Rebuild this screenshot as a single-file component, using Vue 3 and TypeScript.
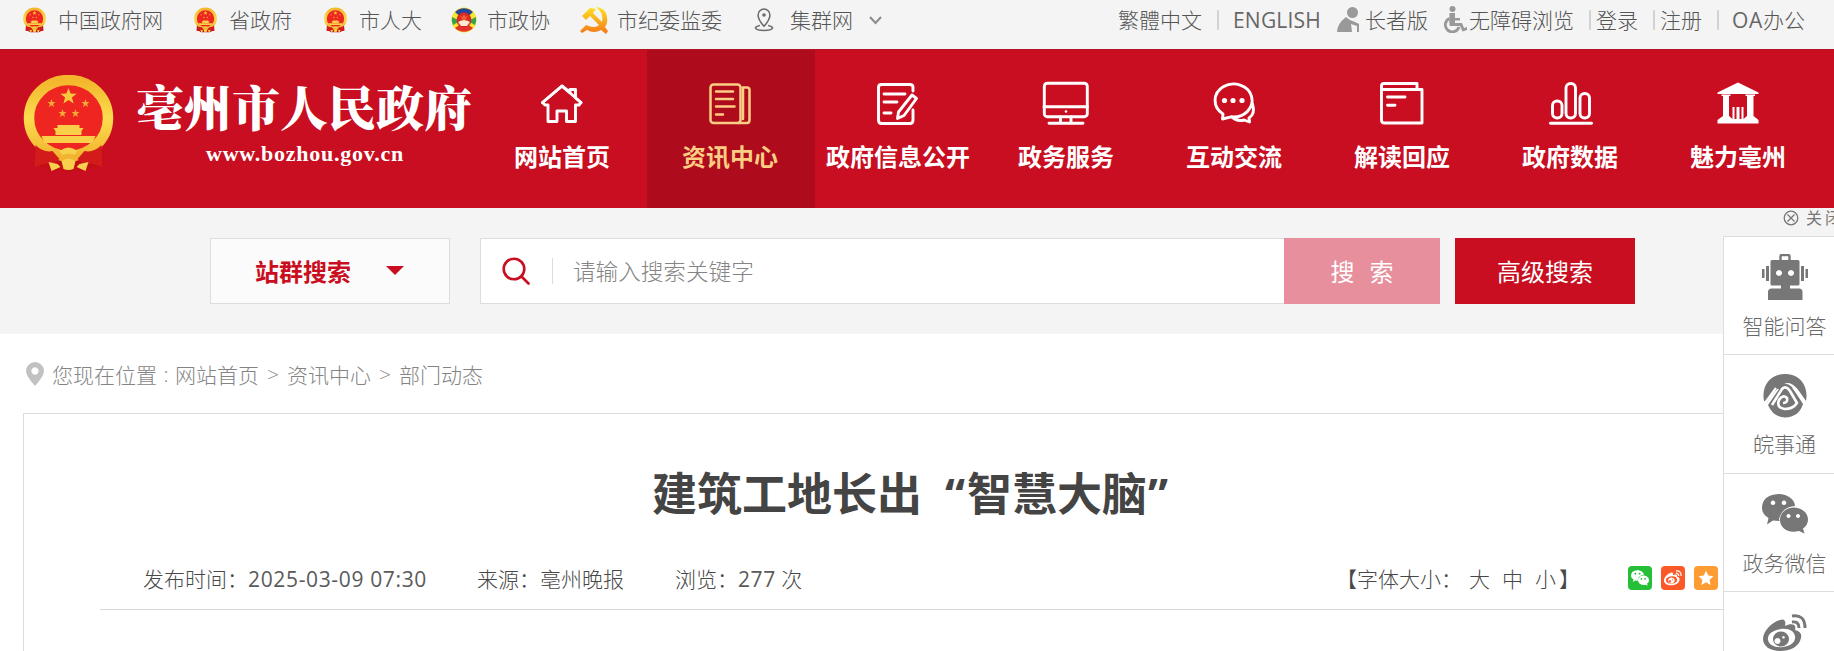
<script setup lang="ts">
interface Link {
  label: string
  icon: string
}

const siteLinks: Link[] = [
  { label: '中国政府网', icon: 'emblem' },
  { label: '省政府', icon: 'emblem' },
  { label: '市人大', icon: 'emblem' },
  { label: '市政协', icon: 'cppcc' },
  { label: '市纪委监委', icon: 'party' },
  { label: '集群网', icon: 'place' },
]

const navItems: Link[] = [
  { label: '网站首页', icon: 'home' },
  { label: '资讯中心', icon: 'news' },
  { label: '政府信息公开', icon: 'edit' },
  { label: '政务服务', icon: 'monitor' },
  { label: '互动交流', icon: 'chat' },
  { label: '解读回应', icon: 'book' },
  { label: '政府数据', icon: 'chart' },
  { label: '魅力亳州', icon: 'temple' },
]
const activeNav = '资讯中心'

const sideItems: Link[] = [
  { label: '智能问答', icon: 'robot' },
  { label: '皖事通', icon: 'wan' },
  { label: '政务微信', icon: 'wechat' },
  { label: '', icon: 'weibo' },
]

const shares = ['wechat', 'weibo', 'star']
</script>

<template>
  <div class="page">
    <svg class="defs" width="0" height="0" aria-hidden="true">
      <defs>
        <linearGradient id="gold" x1="0" y1="0" x2="0" y2="1">
          <stop offset="0" stop-color="#f3b62c" />
          <stop offset=".5" stop-color="#fbdc4e" />
          <stop offset="1" stop-color="#f2b430" />
        </linearGradient>
        <linearGradient id="flame" x1="0" y1="0" x2="0" y2="1">
          <stop offset="0" stop-color="#fde321" />
          <stop offset="1" stop-color="#f5761b" />
        </linearGradient>
      </defs>
      <symbol id="i-emblem" viewBox="0 0 90 97">
        <path d="M12 66 L78 66 L80 90 Q68 92 62 96 L28 96 Q20 91 10 90Z" fill="#c20f16" />
        <ellipse cx="45" cy="43" rx="39.5" ry="38" fill="#ee2520" stroke="url(#gold)" stroke-width="10.5" />
        <path d="M45 13l2.1 5.6 6 .2-4.7 3.8 1.7 5.8-5.1-3.3-5.1 3.3 1.7-5.8-4.7-3.8 6-.2z" fill="#f9c840" />
        <path d="M28 24l1 3 3 0-2.400 2 1 3-2.600-1.800-2.600 1.800 1-3-2.400-2 3 0zM62 24l1 3 3 0-2.400 2 1 3-2.600-1.800-2.600 1.800 1-3-2.400-2 3 0zM39 34l1 3 3 0-2.400 2 1 3-2.600-1.800-2.600 1.800 1-3-2.400-2 3 0zM52 34l1 3 3 0-2.400 2 1 3-2.600-1.800-2.600 1.800 1-3-2.400-2 3 0z" fill="#f5a936" />
        <path d="M34 50h22v3h4l-2 3v4H32v-4l-2-3h4zM18 61h54l-3 7H21z" fill="#f9cf49" />
        <path d="M12 70q8 8 17 6l7 8-5 4q-10 0-20 4zM78 70q-8 8-17 6l-7 8 5 4q10 0 20 4z" fill="#d31b1c" />
        <path d="M36 76q9-7 18 0l-3 4q-6-3-12 0zM38 86q7-5 14 0l-2 8q-5 2-10 0zM25 87l9 2 3 3-9 4zM65 87l-9 2-3 3 9 4z" fill="#f8d04c" />
      </symbol>
      <symbol id="i-cppcc" viewBox="0 0 26 26">
        <circle cx="13" cy="13" r="12.500" fill="#f7e62b" />
        <path d="M4 5A12.500 12.500 0 0 1 22 5L13 13Z" fill="#28459c" />
        <path d="M1 10A12.500 12.500 0 0 0 2 18L9 14ZM25 10A12.500 12.500 0 0 1 24 18L17 14Z" fill="#35a44a" />
        <path d="M4 21A12.500 12.500 0 0 0 22 21L13 15Z" fill="#e3342c" />
        <circle cx="13" cy="13" r="7.500" fill="#d92826" />
        <path d="M7 15q6-4 12 0l-3 4h-6z" fill="#fbe9d4" />
        <path d="M13 7l1.200 2.600h3l-2.300 1.800.8 2.800-2.700-1.700-2.700 1.700.8-2.800-2.300-1.800h3z" fill="#f0602c" />
      </symbol>
      <symbol id="i-party" viewBox="0 0 28 28">
        <path d="M16 1q10 1 11 10 1 6-2 10l3 4-2 3-5-4Q14 28 7 24l-5 3-2-2 6-6q9 4 13 0L10 10 6 14 2 10l8-8 6 1-3 4 9 9q2-9-6-15z" fill="url(#flame)" />
      </symbol>
      <symbol id="i-place" viewBox="0 0 22 26">
        <g fill="none" stroke="#6d6d6d" stroke-width="1.700">
          <path d="M11 20.500Q4.500 13 4.500 8.200A6.500 6.700 0 0 1 17.500 8.200Q17.500 13 11 20.500Z" />
          <path d="M6.500 19.500C-1 21 0 25 11 25S23 21 15.500 19.500" />
        </g>
        <circle cx="11" cy="8" r="2" fill="#6d6d6d" />
      </symbol>

      <symbol id="i-home" viewBox="0 0 48 48">
        <path d="M24 6L4.500 22.500L7 25H10V41.500H19V31H28.500V41.500H37.500V25H41L43 22.500L37.500 18V9.500H32V12.500Z" />
        <path d="M4.500 22.500L24 6L43 22.500" />
      </symbol>
      <symbol id="i-news" viewBox="0 0 48 48">
        <rect x="4.500" y="4.500" width="30" height="38.500" rx="3" />
        <path d="M36.500 7.500H41Q43.500 7.500 43.500 10V40Q43.500 43 41 43H32M37 8V39M10 11.500H27M10 19H27M10 26.500H28.500M10 34.500H17" />
      </symbol>
      <symbol id="i-edit" viewBox="0 0 48 48">
        <path d="M39 11V7.500Q39 4.500 36 4.500H7.500Q4.500 4.500 4.500 7.500V40Q4.500 43.500 7.500 43.500H36Q39 43.500 39 40V30M10 14H31M10 22H23M10 33H17" />
        <path d="M38 15L42.500 18.500L30 35.500L23.500 38.500L24.500 32Z" />
      </symbol>
      <symbol id="i-monitor" viewBox="0 0 48 48">
        <rect x="2.300" y="3.200" width="43" height="33.500" rx="3" />
        <path d="M2 26.800H45.500M18.500 37V43M29 37V43M7 43.200H41" />
        <circle class="solid" cx="24" cy="31.500" r="1.300" />
      </symbol>
      <symbol id="i-chat" viewBox="0 0 48 48">
        <path d="M12.500 39L13 34A18.500 16.500 0 1 1 21 36.800Z" />
        <path d="M42.500 24Q45.500 34 39 38L39.500 42L34 40Q27 42 22 37" />
        <circle class="solid" cx="14.500" cy="20.500" r="2.600" />
        <circle class="solid" cx="23" cy="20.500" r="2.600" />
        <circle class="solid" cx="32" cy="20.500" r="2.600" />
      </symbol>
      <symbol id="i-book" viewBox="0 0 48 48">
        <path d="M3.500 9.500V6Q3.500 3.500 6 3.500H39V9.500M3.500 9.500H44V43H6.500Q3.500 43 3.500 40ZM9.500 17H27M9.500 25.300H17" />
      </symbol>
      <symbol id="i-chart" viewBox="0 0 48 48">
        <rect x="6.500" y="21" width="9.500" height="17" rx="4.500" />
        <rect x="20" y="3.500" width="9.500" height="34.500" rx="4.500" />
        <rect x="34" y="13.500" width="9.500" height="24.500" rx="4.500" />
        <path d="M4.500 43.200H45.500" />
      </symbol>
      <symbol id="i-temple" viewBox="0 0 48 48">
        <path class="solid" d="M24 2.500L44.500 12.500V14H3.500V12.500ZM7.500 14.500H16.500V16H15V36L18.500 39V27H20.500V39H22.500V27H25.500V39H27.500V27H29.500V39L33 36V16H31.500V14.500H41V16H39.500V36L44.500 40V43.500H3.500V40L9 36V16H7.500Z" />
      </symbol>

      <symbol id="i-robot" viewBox="0 0 46 46">
        <path d="M18.500 6V2.500Q18.500 1 20 1H26Q27.500 1 27.500 2.500V6" fill="none" stroke="currentColor" stroke-width="2.400" />
        <path fill-rule="evenodd" d="M10 6H36Q37.500 6 37.500 7.500V30Q37.500 31.500 36 31.500H28V34.500H37Q40.500 34.500 40.500 38V46H6V38Q6 34.500 9.500 34.500H19V31.500H10Q8.500 31.500 8.500 30V7.500Q8.500 6 10 6ZM17 16A3 3 0 1 0 17.010 16ZM29 16A3 3 0 1 0 29.010 16Z" />
        <path d="M4 12h3v15H4zM39 12h3v15h-3zM0 15h2.500v9H0zM43.500 15H46v9h-2.500z" />
      </symbol>
      <symbol id="i-wan" viewBox="0 0 44 44">
        <path d="M1 27C-2 11 8 0 22 0S46 11 43 27L36 17Q30 9 25 9 18 9 9 21L4 28ZM5 31L16 15 11 15 20 10Q25 9 29 13L40 30Q36 43 22 43.500 10 43 5 31Z" />
        <path d="M9 31L19 15Q23 11 27 17L34 29Q30 35 22 35 13 34 16 26 20 20 24 24 25 29 20 29" fill="none" stroke="#fff" stroke-width="2.600" />
        <path d="M2 29L13 14M42 29L30 13" fill="none" stroke="#fff" stroke-width="2.200" />
      </symbol>
      <symbol id="i-wechat" viewBox="0 0 46 40">
        <path fill-rule="evenodd" d="M16.500 0C26 0 33 6 33 12Q20 13 17 25 18 27 17 27L11 26.500 5 30.500 6.500 24Q0 20 0 14 0 1 16.500 0ZM11 6.500A2.300 2.300 0 1 0 11.010 6.500ZM22 6.500A2.300 2.300 0 1 0 22.010 6.500Z" />
        <path fill-rule="evenodd" d="M31.500 13.500C40 13.500 46 19 46 25.500Q46 31 41 34.500L42.500 39.500 37 37C26 40 18 34 18 26 18 19 24 13.500 31.500 13.500ZM26.500 20A2 2 0 1 0 26.510 20ZM36 20A2 2 0 1 0 36.010 20Z" />
      </symbol>
      <symbol id="i-weibo" viewBox="0 0 44 38">
        <path fill-rule="evenodd" d="M17 6C22 4 23 8 22 12 28 9 34 10 32 16 37 17 39 20 38 24 36 33 27 37 17 37 7 37 0 32 0 25 0 17 9 8 17 6ZM18 15C10 16 4 20 5 26 6 31 12 34 20 33 28 32 33 28 32 22 31 17 26 14 18 15Z" />
        <path fill-rule="evenodd" d="M18 17.500A8 7.500 0 1 0 18.010 17.500ZM14.500 24A3 3 0 1 0 14.510 24ZM20.500 22A1.300 1.300 0 1 0 20.510 22Z" />
        <path d="M29 2Q42 0 42 14M29 8Q36 7 36 14" fill="none" stroke="currentColor" stroke-width="3" />
      </symbol>
      <symbol id="i-star" viewBox="0 0 24 24">
        <path d="M12 1l3.400 7.300 7.800.9-5.800 5.400 1.600 7.900-7-4-7 4 1.600-7.900L.8 9.200l7.800-.9z" />
      </symbol>
    </svg>

    <div class="topbar">
      <ul class="sites">
        <li v-for="(s, i) in siteLinks" :key="s.label" :class="['site', 's' + i]">
          <svg :class="'mark-' + s.icon"><use :href="'#i-' + s.icon" /></svg>
          <span>{{ s.label }}</span>
        </li>
        <li class="more">
          <svg viewBox="0 0 13 9"><path d="M1 1L6.500 7L12 1" fill="none" stroke="#8a8a8a" stroke-width="2" /></svg>
        </li>
      </ul>
      <div class="tools">
        <span>繁體中文</span>
        <i class="bar b1"></i>
        <span class="english">ENGLISH</span>
        <svg class="elder" viewBox="0 0 22 25">
          <circle cx="15.500" cy="5.500" r="5.500" />
          <path d="M9 10Q13 14 18 15L22 17V25H20V19L14 17 15 25H0Q0 17 9 10Z" />
        </svg>
        <span>长者版</span>
        <svg class="wheel" viewBox="0 0 25 27">
          <circle cx="10.500" cy="3" r="3" />
          <path d="M7.500 7H13V12H18V14.500H13V17H20L22 22 25 21V24L20.500 25.500 18 20H8Q7 20 7.500 7Z" />
          <path d="M7.500 12.500A7 7 0 1 0 17 21" fill="none" stroke="#999" stroke-width="2.800" />
        </svg>
        <span>无障碍浏览</span>
        <i class="bar b2"></i>
        <span>登录</span>
        <i class="bar b3"></i>
        <span>注册</span>
        <i class="bar b4"></i>
        <span class="office"><em>OA</em>办公</span>
      </div>
    </div>

    <header class="header">
      <div class="brand">
        <svg class="emblem"><use href="#i-emblem" /></svg>
        <div class="names">
          <div class="name">亳州市人民政府</div>
          <div class="url">www.bozhou.gov.cn</div>
        </div>
      </div>
      <nav class="nav">
        <a v-for="n in navItems" :key="n.label" :class="['nav-item', { active: n.label === activeNav }]">
          <svg class="nav-icon"><use :href="'#i-' + n.icon" /></svg>
          <span>{{ n.label }}</span>
        </a>
      </nav>
    </header>

    <section class="search">
      <div class="scope">
        <span>站群搜索</span>
        <i class="caret"></i>
      </div>
      <div class="field">
        <svg viewBox="0 0 28 28"><circle cx="12" cy="12" r="10.300" /><path d="M19.500 19.500L26.500 26.500" /></svg>
        <i class="split"></i>
        <span class="hint">请输入搜索关键字</span>
      </div>
      <button class="go"><span>搜</span><span>索</span></button>
      <button class="advanced">高级搜索</button>
    </section>

    <div class="crumbs">
      <svg viewBox="0 0 18 24"><path fill-rule="evenodd" d="M9 0A9 9 0 0 1 18 9Q18 14 9 24 0 14 0 9A9 9 0 0 1 9 0ZM9 5.300A3.700 3.700 0 1 0 9.010 5.300Z" /></svg>
      <span>您现在位置</span><b class="colon">:</b><span>网站首页</span><b>&gt;</b><span>资讯中心</span><b>&gt;</b><span>部门动态</span>
    </div>

    <article class="article">
      <h1>建筑工地长出<span class="open">“</span>智慧大脑<span class="shut">”</span></h1>
      <div class="meta">
        <span class="time">发布时间：<em>2025-03-09 07:30</em></span>
        <span class="source">来源：亳州晚报</span>
        <span class="views">浏览：<em>277</em> 次</span>
        <div class="sizes">
          <span class="lead">【字体大小：</span><span>大</span><span>中</span><span>小</span><span class="tail">】</span>
        </div>
        <div class="share">
          <i v-for="s in shares" :key="s" :class="s"><svg><use :href="'#i-' + s" /></svg></i>
        </div>
      </div>
    </article>

    <aside class="side">
      <div class="close">
        <svg viewBox="0 0 16 16"><circle cx="8" cy="8" r="6.800" /><path d="M4.500 4.500L11.500 11.500M11.500 4.500L4.500 11.500" /></svg>
        <span>关闭</span>
      </div>
      <div v-for="s in sideItems" :key="s.icon" class="side-item">
        <svg :class="s.icon"><use :href="'#i-' + s.icon" /></svg>
        <span v-if="s.label">{{ s.label }}</span>
      </div>
    </aside>
  </div>
</template>

<style>
html,
body {
  margin: 0;
  overflow: hidden;
}
</style>

<style scoped>
.page {
  position: relative;
  width: 1834px;
  height: 651px;
  overflow: hidden;
  background: #fff;
  color: #555;
  font-family: "Open Sans", "Noto Sans CJK SC", sans-serif;
  font-size: 21px;
  font-weight: 300;
  white-space: nowrap;
}
.defs {
  position: absolute;
}
svg {
  display: block;
  flex: none;
}
i,
em,
b {
  font-style: normal;
  font-weight: inherit;
}

.topbar {
  display: flex;
  justify-content: space-between;
  height: 49px;
  background: #f4f4f4;
  line-height: 38px;
}
.sites {
  display: flex;
  margin: 0;
  padding: 0;
  list-style: none;
}
.site {
  display: flex;
  height: 39px;
  align-items: center;
  box-sizing: border-box;
}
.s0 { width: 171px; margin-left: 23px; }
.s1 { width: 130px; }
.s2 { width: 127px; }
.s3 { width: 129px; }
.s4 { width: 174px; }
.s5 { width: 115px; }
.mark-emblem { width: 23px; height: 26px; margin-right: 12px; }
.mark-cppcc { width: 26px; height: 26px; margin-right: 10px; }
.mark-party { width: 28px; height: 28px; margin-right: 9px; }
.mark-place { width: 20px; height: 25px; margin-right: 16px; }
.more svg { width: 13px; height: 9px; margin-top: 16px; }
.tools {
  display: flex;
  height: 39px;
  align-items: center;
  margin-right: 27px;
}
.bar {
  width: 2px;
  height: 20px;
  background: #d2d2d2;
}
.b1 { margin: 0 14px 0 15px; }
.b2 { margin: 0 5px 0 15px; }
.b3 { margin: 0 5px 0 15px; }
.b4 { margin: 0 13px 0 15px; }
.english,
em {
  font-weight: 400;
}
.english {
  width: 89px;
  color: #666;
  letter-spacing: 0.2px;
}
.office {
  width: 75px;
}
.office em {
  color: #666;
  letter-spacing: 0.7px;
}
.elder { width: 22px; height: 25px; margin: 0 6px 0 15px; fill: #999; }
.wheel { width: 25px; height: 27px; margin: 0 2px 0 14px; fill: #999; }

.header {
  display: flex;
  height: 159px;
  box-sizing: border-box;
  border-top: 1px solid #b01523;
  background: #c80e20;
  color: #fff;
}
.brand {
  display: flex;
  width: 479px;
}
.emblem {
  width: 91px;
  height: 97px;
  margin: 25px 0 0 23px;
}
.names {
  margin-left: 22px;
  width: 340px;
}
.name {
  margin-top: 21px;
  font: 900 48px/70px "Noto Serif CJK SC", "Noto Sans CJK SC", serif;
}
.url {
  margin: 0 0 0 70px;
  font: bold 22px/26px "Liberation Serif", serif;
  letter-spacing: 0.75px;
}
.nav {
  display: flex;
}
.nav-item {
  display: flex;
  flex-direction: column;
  align-items: center;
  width: 168px;
  padding: 30px 2px 0 0;
  box-sizing: border-box;
  color: #fff;
  font-size: 24px;
  font-weight: 700;
  line-height: 36px;
}
.nav-item span {
  margin-top: 11px;
}
.nav-item.active {
  background: #ae0b1c;
  color: #fbce84;
}
.nav-icon {
  width: 48px;
  height: 48px;
  fill: none;
  stroke: currentColor;
  stroke-width: 2.9;
  stroke-linecap: round;
  stroke-linejoin: round;
}
.active .nav-icon {
  stroke-width: 2.5;
}
.solid {
  fill: currentColor;
  stroke: none;
}

.search {
  display: flex;
  height: 126px;
  padding: 30px 0 0 210px;
  box-sizing: border-box;
  background: #f4f4f4;
}
.scope {
  display: flex;
  align-items: center;
  width: 240px;
  height: 66px;
  padding: 0 0 2px 44px;
  box-sizing: border-box;
  border: 1px solid #ddd;
  background: #fbfbfb;
  color: #c80e20;
  font-size: 24px;
  font-weight: 700;
}
.caret {
  margin-left: 35px;
  border: 9px solid transparent;
  border-top-color: #c80e20;
  border-bottom: 0;
}
.field {
  display: flex;
  align-items: center;
  width: 804px;
  height: 66px;
  margin-left: 30px;
  box-sizing: border-box;
  border: 1px solid #ddd;
  border-right: 0;
  background: #fff;
}
.field svg {
  width: 28px;
  height: 28px;
  margin-left: 21px;
  fill: none;
  stroke: #c80e20;
  stroke-width: 2.6;
  stroke-linecap: round;
}
.split {
  width: 1px;
  height: 26px;
  margin: 0 20px 0 22px;
  background: #ddd;
}
.hint {
  padding-bottom: 2px;
  color: #848484;
  font-size: 22.6px;
}
button {
  height: 66px;
  padding: 0 0 2px;
  border: 0;
  color: #fff;
  font: 400 24px "Open Sans", "Noto Sans CJK SC", sans-serif;
}
.go {
  display: flex;
  align-items: center;
  justify-content: center;
  gap: 15px;
  width: 156px;
  background: #e78f9c;
}
.advanced {
  width: 180px;
  margin-left: 15px;
  background: #c80e20;
}

.crumbs {
  display: flex;
  align-items: center;
  height: 79px;
  padding-left: 26px;
  color: #848484;
}
.crumbs svg {
  width: 18px;
  height: 24px;
  margin: 0 8px 0 0;
  fill: #c1c1c1;
}
.crumbs b {
  width: 28px;
  text-align: center;
}
.crumbs .colon {
  width: 18px;
}

.article {
  width: 1830px;
  height: 260px;
  margin-left: 23px;
  box-sizing: border-box;
  border: 1px solid #ddd;
}
h1 {
  margin: 47px 0 0 628px;
  color: #444;
  font-size: 45px;
  font-weight: 700;
  line-height: 66px;
}
h1 .open {
  margin-left: 23px;
  margin-right: 2px;
}
h1 .shut {
  margin-left: 1px;
}
.meta {
  display: flex;
  align-items: center;
  width: 1740px;
  height: 60px;
  margin: 23px 0 0 76px;
  padding: 0 0 4px 43px;
  box-sizing: border-box;
  border-bottom: 1px solid #d8d8d8;
  color: #484848;
}
.meta em {
  color: #5a5a5a;
}
.time em {
  letter-spacing: 0.65px;
}
.time { width: 334px; }
.source { width: 198px; }
.views { width: 661px; }
.views em { letter-spacing: 0.6px; }
.sizes {
  display: flex;
}
.sizes span {
  width: 33px;
}
.sizes .lead { width: 133px; }
.sizes .tail { width: 21px; margin-left: -9px; }
.share {
  display: flex;
  gap: 9px;
  margin-left: 48px;
}
.share i {
  display: flex;
  align-items: center;
  justify-content: center;
  width: 24px;
  height: 24px;
  border-radius: 4px;
  background: #27be37;
  color: #fff;
}
.share .weibo { background: #fb5a28; }
.share .star { background: #fd9c33; }
.share svg {
  width: 18px;
  height: 16px;
  fill: currentColor;
}

.side {
  position: absolute;
  top: 208px;
  left: 1723px;
  width: 123px;
  color: #777;
}
.close {
  display: flex;
  align-items: center;
  height: 28px;
  padding-left: 60px;
  box-sizing: border-box;
  font-size: 16px;
  font-weight: 400;
  letter-spacing: 3px;
  line-height: 20px;
}
.close svg {
  width: 16px;
  height: 16px;
  margin: -8px 7px 0 0;
  fill: none;
  stroke: #777;
  stroke-width: 1.3;
}
.close span {
  margin-top: -8px;
}
.side-item {
  display: flex;
  flex-direction: column;
  align-items: center;
  height: 118.3px;
  box-sizing: border-box;
  border: 1px solid #ddd;
  border-bottom: 0;
  background: #fff;
  color: #777;
  line-height: 30px;
}
.side-item span {
  color: #686868;
}
.side-item svg {
  width: 46px;
  height: 46px;
  margin: 17px 0 11px;
  fill: currentColor;
}
.side-item .wan { width: 44px; height: 44px; margin: 19px 0 11px; }
.side-item .wechat { width: 46px; height: 40px; margin: 20px 0 14px; }
.side-item .weibo { width: 44px; height: 38px; margin: 22px 0 14px; }
</style>
